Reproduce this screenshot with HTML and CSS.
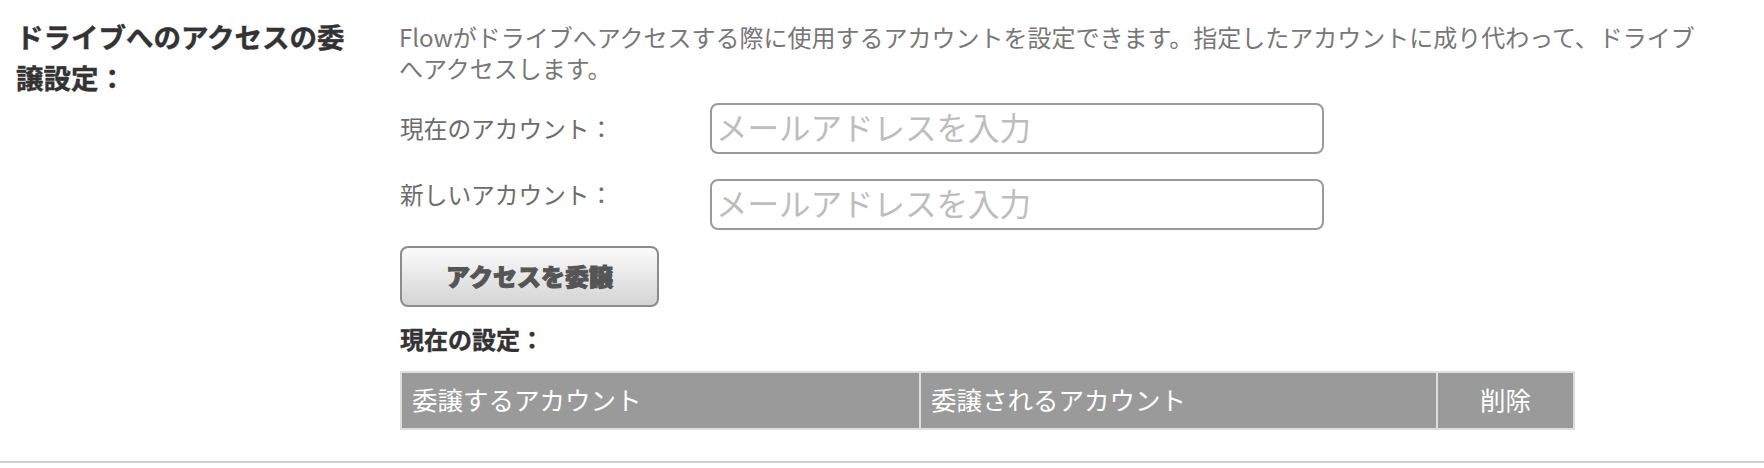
FILE: index.html
```html
<!DOCTYPE html>
<html lang="ja">
<head>
<meta charset="utf-8">
<title>ドライブへのアクセスの委譲設定</title>
<link rel="stylesheet" href="styles.css">
</head>
<body>
<div class="section">
  <div class="title">ドライブへのアクセスの委譲設定：</div>
  <div class="content">
    <p class="desc">Flowがドライブへアクセスする際に使用するアカウントを設定できます。指定したアカウントに成り代わって、ドライブへアクセスします。</p>
    <div class="form">
      <div class="row">
        <label class="label label-first">現在のアカウント：</label>
        <input class="field" type="text" placeholder="メールアドレスを入力">
      </div>
      <div class="row">
        <label class="label label-second">新しいアカウント：</label>
        <input class="field" type="text" placeholder="メールアドレスを入力">
      </div>
    </div>
    <button class="btn" type="button">アクセスを委譲</button>
    <h3 class="sub">現在の設定：</h3>
    <table class="tbl">
      <thead>
        <tr>
          <th class="col-from">委譲するアカウント</th>
          <th class="col-to">委譲されるアカウント</th>
          <th class="col-del">削除</th>
        </tr>
      </thead>
    </table>
  </div>
</div>
<div class="rule"></div>
</body>
</html>
```
FILE: styles.css
```css
html, body {
  margin: 0;
  padding: 0;
  background: #ffffff;
}

body {
  font-family: "Noto Sans CJK JP", "Noto Sans", sans-serif;
  color: #777777;
}

.section {
  display: flex;
  align-items: flex-start;
  padding: 16px 0 31px 16px;
}

.title {
  width: 341px;
  flex: none;
  font-size: 27.5px;
  line-height: 41px;
  font-weight: 700;
  color: #333333;
  -webkit-text-stroke: 0.4px #333333;
}

.content {
  margin-left: 42px;
  width: 1308px;
  padding-top: 5px;
}

.desc {
  margin: 0;
  font-size: 24px;
  line-height: 31px;
  color: #777777;
}

.form {
  display: flex;
  flex-direction: column;
  gap: 25px;
  margin-top: 20px;
}

.row {
  display: flex;
  align-items: flex-start;
}

.label {
  width: 310px;
  flex: none;
  padding-left: 1px;
  font-size: 23.7px;
  line-height: 33px;
  color: #6c6c6c;
}

.label-first {
  padding-top: 8.5px;
}

.label-second {
  margin-top: -1.5px;
}

.field {
  box-sizing: border-box;
  width: 614px;
  height: 51px;
  margin: 0;
  border: 2px solid #9a9a9a;
  border-radius: 8px;
  padding: 0 4px 5px;
  font-family: "Noto Sans CJK JP", "Noto Sans", sans-serif;
  font-size: 31.5px;
  color: #333333;
  background: #ffffff;
  outline: none;
}

.field::placeholder {
  color: #bdbdbd;
}

.btn {
  display: block;
  box-sizing: border-box;
  width: 259px;
  height: 61px;
  margin: 16px 0 0 1px;
  padding: 0 0 2px;
  border: 2px solid #8c8c8c;
  border-radius: 8px;
  background: linear-gradient(#fbfbfb, #d4d4d4);
  font-family: "Noto Sans CJK JP", "Noto Sans", sans-serif;
  font-size: 24px;
  font-weight: 900;
  color: #555555;
  -webkit-text-stroke: 1px #555555;
  cursor: pointer;
}

.sub {
  margin: 14.5px 0 0 1px;
  font-size: 24px;
  line-height: 33px;
  font-weight: 700;
  color: #333333;
  -webkit-text-stroke: 0.4px #333333;
}

.tbl {
  margin: 16.5px 0 0 1px;
  width: 1175px;
  border-collapse: collapse;
  table-layout: fixed;
}

.tbl th {
  height: 51px;
  padding: 0 10px 4px;
  border: 2px solid #dddddd;
  background: #9a9a9a;
  color: #ffffff;
  font-size: 25.5px;
  font-weight: 400;
  text-align: left;
  vertical-align: middle;
}

.tbl .col-from {
  width: 497px;
}

.tbl .col-to {
  width: 495px;
}

.tbl .col-del {
  text-align: center;
}

.rule {
  height: 2px;
  background: #d0d0d0;
}
```
